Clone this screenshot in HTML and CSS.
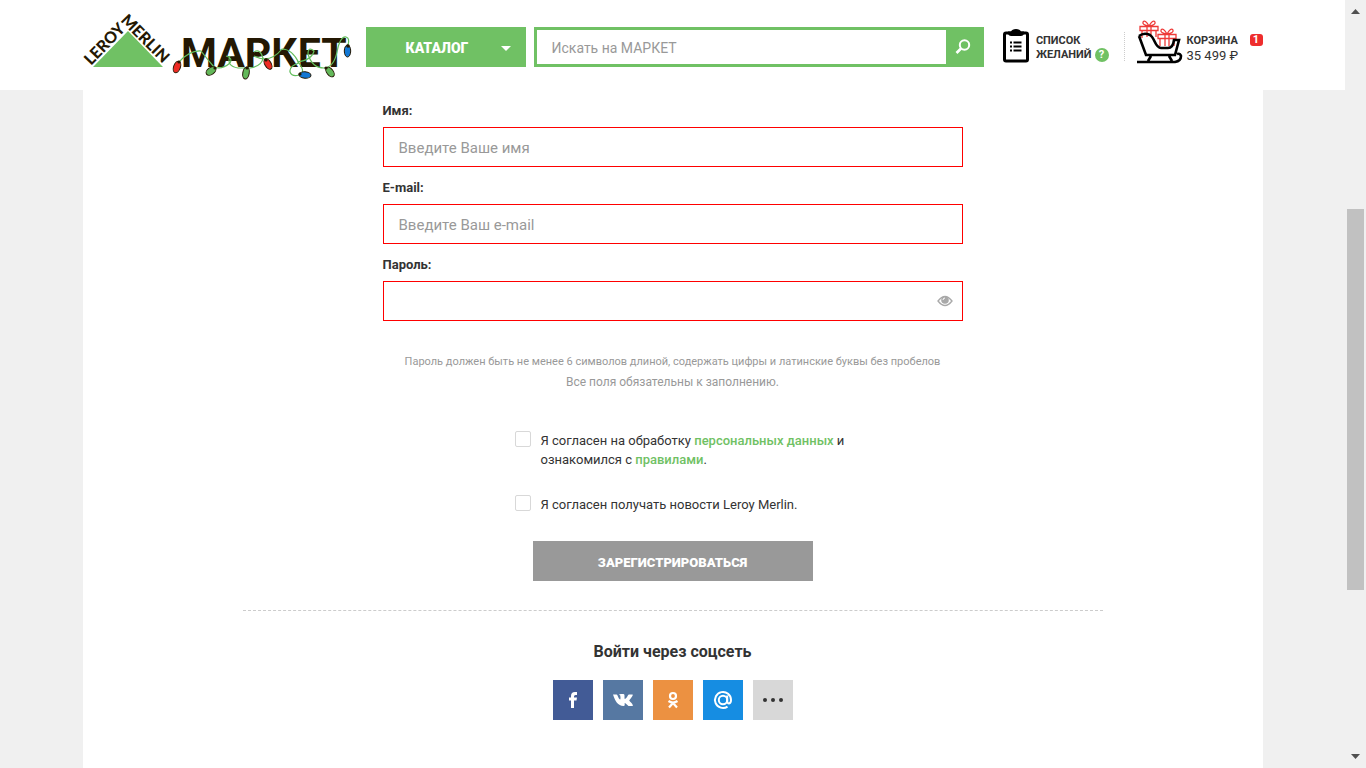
FILE: index.html
```html
<!DOCTYPE html>
<html lang="ru">
<head>
<meta charset="utf-8">
<title>Регистрация — Леруа Мерлен Маркет</title>
<link rel="stylesheet" href="styles.css">
</head>
<body>
<div class="page">
  <header class="header">
    <div class="header-inner">
      <a class="logo" href="#" aria-label="Leroy Merlin Маркет">
        <svg class="logo-art" viewBox="83 8 275 74" width="275" height="74">
          <path d="M93 67 128 31 163 67Z" fill="#70c164"/>
          <g fill="#241803" class="logo-text">
            <text class="logo-small" transform="translate(91 66) rotate(-46)">LEROY</text>
            <text class="logo-small" transform="translate(120 21) rotate(45)">MERLIN</text>
            <text class="logo-big" x="181" y="67">МАРКЕТ</text>
          </g>
          <g fill="none" stroke="#62bd5c" stroke-width="1.2">
            <path d="M179 62Q190 50 201 51Q208 60 214 67"/>
            <path d="M214 67Q222 70 230 63Q233 58 226 56M230 56Q226 66 238 68H250Q262 66 263 58Q260 48 254 52"/>
            <path d="M254 56Q270 64 282 49Q292 49 299 63Q304 70 302 73M299 63Q289 66 290 72Q292 77 299 75"/>
            <path d="M297 62Q312 60 314 51Q308 46 308 54Q312 68 324 68Q334 67 337 52Q340 36 346 37Q350 38 348 45"/>
          </g>
          <g stroke="#241803" stroke-width="1">
            <ellipse cx="177" cy="67" rx="3.4" ry="6" fill="#ee2b24" transform="rotate(20 177 67)"/>
            <ellipse cx="211" cy="71" rx="3.4" ry="5.5" fill="#63b85a" transform="rotate(55 211 71)"/>
            <ellipse cx="246" cy="73" rx="3.2" ry="6" fill="#63b85a" transform="rotate(10 246 73)"/>
            <ellipse cx="268" cy="64" rx="3.2" ry="5.8" fill="#ee2b24" transform="rotate(-30 268 64)"/>
            <ellipse cx="305" cy="75" rx="6" ry="3.2" fill="#1277d4" transform="rotate(5 305 75)"/>
            <ellipse cx="330" cy="72" rx="3.2" ry="5.6" fill="#63b85a" transform="rotate(-38 330 72)"/>
            <ellipse cx="347.500" cy="51" rx="3.2" ry="6" fill="#1277d4"/>
          </g>
          <g fill="#241803">
            <circle cx="179" cy="62" r="1.600"/><circle cx="215" cy="68" r="1.600"/><circle cx="247" cy="68" r="1.600"/><circle cx="266" cy="60" r="1.600"/><circle cx="300" cy="74" r="1.600"/><circle cx="326" cy="68" r="1.600"/><circle cx="348" cy="46" r="1.800"/>
          </g>
        </svg>
      </a>
      <button class="catalog" type="button">
        <span class="catalog-label">КАТАЛОГ</span>
        <svg class="catalog-arrow" viewBox="0 0 10 5" width="10" height="5"><path d="M0 0H10L5 5Z" fill="#fff"/></svg>
      </button>
      <form class="search">
        <input class="search-input" type="text" placeholder="Искать на МАРКЕТ" aria-label="Поиск">
        <button class="search-button" type="button" aria-label="Найти">
          <svg viewBox="0 0 16 16" width="16" height="16" fill="none" stroke="#fff"><circle cx="9.500" cy="6" r="4.700" stroke-width="2"/><path d="M6 9.500 1.500 14" stroke-width="2.600"/></svg>
        </button>
      </form>
      <a class="wishlist" href="#">
        <svg viewBox="0 0 26 34" width="26" height="34"><rect x="1.500" y="4" width="23" height="28" rx="1.500" fill="#fff" stroke="#000" stroke-width="3"/><path d="M5 2.500H8Q9 0 13 0Q17 0 18 2.500H21V5Q20 7 18 7H8Q6 7 5 5Z" fill="#000"/><path d="M10.500 13.500H18.500M10.500 17.500H18.500M10.500 21.500H18.500M7 13.500H9M7 17.500H9M7 21.500H9" stroke="#000" stroke-width="2"/></svg>
        <span class="wishlist-text">СПИСОК<span class="wishlist-row">ЖЕЛАНИЙ <span class="help">?</span></span></span>
      </a>
      <a class="cart" href="#">
        <svg viewBox="0 0 46 46" width="46" height="46" fill="none">
          <g stroke="#ee3a38" stroke-width="1.300"><path d="M3 7.500H21V11.500H3ZM5 11.500V19M19 11.500V18M10 7.500V18M14 7.500V18M12 7Q5 6 6 3Q8 0 12 7Q16 0 18 3Q19 6 12 7"/><path d="M21 15.500H39V19.500H21ZM23 19.500V27M37 19.500V27M28 15.500V27M32 15.500V27M30 15Q23 14 24 11Q26 8 30 15Q34 8 36 11Q37 14 30 15"/></g>
          <path d="M2 17Q7 13 13 16C18 19 18 29 24 29H31Q36 29 37 21H42L38 36H9L2 17M14 37 11 42M32 37 35 42M0 43H38Q44 42 44 37Q43 34 40 35" stroke="#000" stroke-width="2.600"/>
        </svg>
        <span class="cart-text"><strong class="cart-title">КОРЗИНА</strong><span class="cart-sum">35 499 ₽</span></span>
        <span class="badge">1</span>
      </a>
    </div>
  </header>
  <main class="content">
    <form class="register">
      <div class="fields">
        <label class="field-label" for="name">Имя:</label>
        <input class="field" id="name" type="text" placeholder="Введите Ваше имя">
        <label class="field-label" for="email">E-mail:</label>
        <input class="field" id="email" type="email" placeholder="Введите Ваш e-mail">
        <label class="field-label" for="password">Пароль:</label>
        <div class="password">
          <input class="field" id="password" type="password">
          <button class="reveal" type="button" aria-label="Показать пароль"><svg viewBox="0 0 16 12" width="16" height="12"><path d="M1 6Q8-3 15 6Q8 15 1 6Z" fill="none" stroke="#a9a9a9" stroke-width="1.300"/><circle cx="8" cy="5" r="3.800" fill="#a9a9a9"/><path d="M6 5Q6 3 8 3" stroke="#fff" fill="none"/></svg></button>
        </div>
      </div>
      <p class="hint hint-small">Пароль должен быть не менее 6 символов длиной, содержать цифры и латинские буквы без пробелов</p>
      <p class="hint">Все поля обязательны к заполнению.</p>
      <div class="consents">
        <div class="consent"><input class="check" id="terms" type="checkbox"><label for="terms">Я согласен на обработку <a class="link" href="#">персональных данных</a> и<br>ознакомился с <a class="link" href="#">правилами</a>.</label></div>
        <div class="consent"><input class="check" id="news" type="checkbox"><label for="news">Я согласен получать новости Leroy Merlin.</label></div>
      </div>
      <button class="submit" type="button">ЗАРЕГИСТРИРОВАТЬСЯ</button>
    </form>
    <section class="social">
      <h2 class="social-title">Войти через соцсеть</h2>
      <div class="social-list">
        <a class="social-link facebook" href="#" aria-label="Facebook"><svg viewBox="0 0 20 20" width="20" height="20"><path d="M8 18V10.500H6V7.500H8V6Q8 2 12 2H14V5H12.500Q11 5 11 6.500V7.500H14L13.500 10.500H11V18Z" fill="#fff"/></svg></a>
        <a class="social-link vk" href="#" aria-label="ВКонтакте"><svg viewBox="0 0 20 12" width="20" height="12"><path d="M0 .500H3.500C4 .500 4.200 .800 4.400 1.300C5.200 3.500 6.400 5.500 7 5.500C7.700 5.500 7.600 1.800 7 1.200L6 .700Q6.500 0 8 0H10.500Q11.500 0 11.500 1.500V4.500C12 6 14 3.500 15 1.300Q15.300 .500 16 .500H19.200C20.500 .500 19.500 2.300 16.500 6C16 6.800 16.400 7 17.200 7.800C19.500 10 20.800 12 19 12H16C14.800 12 12.500 8.600 11.700 9V11Q11.700 12 10.500 12C5 12 2 7 0 .500Z" fill="#fff"/></svg></a>
        <a class="social-link ok" href="#" aria-label="Одноклассники"><svg viewBox="0 0 20 20" width="20" height="20" fill="none" stroke="#fff" stroke-width="2.200"><circle cx="10" cy="6" r="3"/><path d="M5.500 11Q10 14 14.500 11M10 13 6 17.500M10 13 14 17.500"/></svg></a>
        <a class="social-link mail" href="#" aria-label="Mail.ru"><svg viewBox="0 0 20 20" width="20" height="20" fill="none" stroke="#fff" stroke-width="2"><circle cx="10" cy="10" r="4.200"/><path d="M14.200 5.500V11Q14.300 13.500 16 13.500Q18 13 18 10A8 8 0 1 0 14.500 16.600"/></svg></a>
        <a class="social-link more" href="#" aria-label="Ещё"><svg viewBox="0 0 20 4" width="20" height="4" fill="#333"><circle cx="2" cy="2" r="2"/><circle cx="10" cy="2" r="2"/><circle cx="18" cy="2" r="2"/></svg></a>
      </div>
    </section>
  </main>
</div>
<div class="scrollbar" aria-hidden="true">
  <svg viewBox="0 0 9 5" width="9" height="5"><path d="M0 5 4.500 0 9 5Z" fill="#505050"/></svg>
  <div class="track"><div class="thumb"></div></div>
  <svg viewBox="0 0 9 5" width="9" height="5"><path d="M0 0H9L4.500 5Z" fill="#505050"/></svg>
</div>
</body>
</html>
```
FILE: styles.css
```css
* { box-sizing: border-box; }
body {
  margin: 0;
  display: flex;
  min-height: 100vh;
  background: #f0f0f0;
  color: #333;
  font: 13px/19px Roboto, "Liberation Sans", sans-serif;
}
a { color: inherit; text-decoration: none; }
button, input { font: inherit; border: 0; border-radius: 0; padding: 0; }
button { cursor: pointer; }
svg { display: block; flex: none; }

.page { flex: 1; display: flex; flex-direction: column; min-width: 0; }
.header { background: #fff; }
.header-inner {
  width: 100%;
  max-width: 1180px;
  height: 90px;
  margin: 0 auto;
  display: flex;
  align-items: flex-start;
}
.logo { margin: 8px 8px 0 0; }
.logo-art { overflow: visible; }
.logo-text { font-family: Roboto, sans-serif; font-weight: 700; }
.logo-small { font-family: Lato, sans-serif; font-size: 16px; font-weight: 900; }
.logo-big { font-size: 41px; }

.catalog {
  display: flex;
  align-items: center;
  width: 160px;
  height: 40px;
  margin: 27px 8px 0 0;
  padding: 3px 15px 0 8px;
  background: #70c164;
  color: #fff;
  font-size: 14px;
  font-weight: 900;
}
.catalog-label { flex: 1; }
.search {
  flex: 1;
  display: flex;
  height: 40px;
  margin-top: 27px;
  border: 3px solid #70c164;
  background: #fff;
}
.search-input { flex: 1; min-width: 0; padding: 2px 15px 0; font-size: 14px; background: none; }
.search-button { display: flex; align-items: center; justify-content: center; width: 35px; background: #70c164; }
::placeholder { color: #999; opacity: 1; }

.wishlist {
  display: flex;
  gap: 7px;
  height: 34px;
  margin: 29px 15px 0 19px;
  font-size: 11px;
  line-height: 14px;
  font-weight: 700;
}
.wishlist-text { padding-top: 5px; }
.wishlist-row { display: flex; gap: 3px; }
.help {
  width: 14px;
  height: 14px;
  border-radius: 50%;
  background: #70c164;
  color: #fff;
  text-align: center;
}
.cart {
  display: flex;
  gap: 4px;
  width: 139px;
  margin-top: 19px;
  padding-left: 13px;
  background: repeating-linear-gradient(#ccc 0 1px, transparent 1px 2px) 0 13px / 1px 30px no-repeat;
}
.cart-text { flex: 1; padding-top: 14px; line-height: 15px; white-space: nowrap; }
.cart-title { display: block; font-size: 11px; }
.cart-sum { display: block; }
.badge {
  width: 13px;
  height: 12px;
  margin-top: 15px;
  border-radius: 3px;
  background: #ee2d2d;
  color: #fff;
  font-size: 11px;
  line-height: 12px;
  font-weight: 700;
  text-align: center;
}

.content {
  flex: 1;
  width: 100%;
  max-width: 1180px;
  margin: 0 auto;
  background: #fff;
}
.register { display: flex; flex-direction: column; align-items: center; }
.fields { width: 580px; max-width: 100%; }
.field-label { display: block; padding: 11px 0 7px; font-weight: 700; }
.field {
  display: block;
  width: 100%;
  height: 40px;
  padding: 2px 15px 0;
  border: 1px solid #f00;
  background: #fff;
  font-size: 15px;
}
.password { position: relative; }
.reveal { position: absolute; top: 14px; right: 10px; background: none; }
.hint { margin: 0; color: #999; font-size: 12px; line-height: 20px; }
.hint-small { margin-top: 31px; font-size: 11px; }
.consents { width: 316px; margin-top: 39px; display: flex; flex-direction: column; gap: 26px; white-space: nowrap; }
.consent { display: flex; align-items: flex-start; gap: 10px; }
.consent label { flex: none; }
.check {
  appearance: none;
  flex: none;
  width: 16px;
  height: 16px;
  margin: 0;
  border: 1px solid #d8d8d8;
  border-radius: 2px;
  background: #fff;
}
.link { color: #70c164; font-weight: 500; }
.submit {
  width: 280px;
  height: 40px;
  margin-top: 27px;
  padding-top: 3px;
  background: #999;
  color: #fff;
  font-weight: 900;
}
.social {
  width: 860px;
  max-width: 100%;
  margin: 29px auto 0;
  padding: 31px 0 48px;
  border-top: 1px dashed #ccc;
}
.social-title { margin: 0 0 18px; font-size: 16px; line-height: 20px; text-align: center; }
.social-list { display: flex; justify-content: center; gap: 10px; }
.social-link { display: flex; align-items: center; justify-content: center; width: 40px; height: 40px; }
.facebook { background: #425b96; }
.vk { background: #5678a2; }
.ok { background: #ec9141; }
.mail { background: #168de2; }
.more { background: #d8d8d8; }

.scrollbar {
  flex: none;
  width: 21px;
  display: flex;
  flex-direction: column;
  align-items: center;
  padding: 9px 0;
}
.track { flex: 1; align-self: stretch; padding: 195px 2px 0; }
.thumb { height: 381px; background: #c1c1c1; }
```
